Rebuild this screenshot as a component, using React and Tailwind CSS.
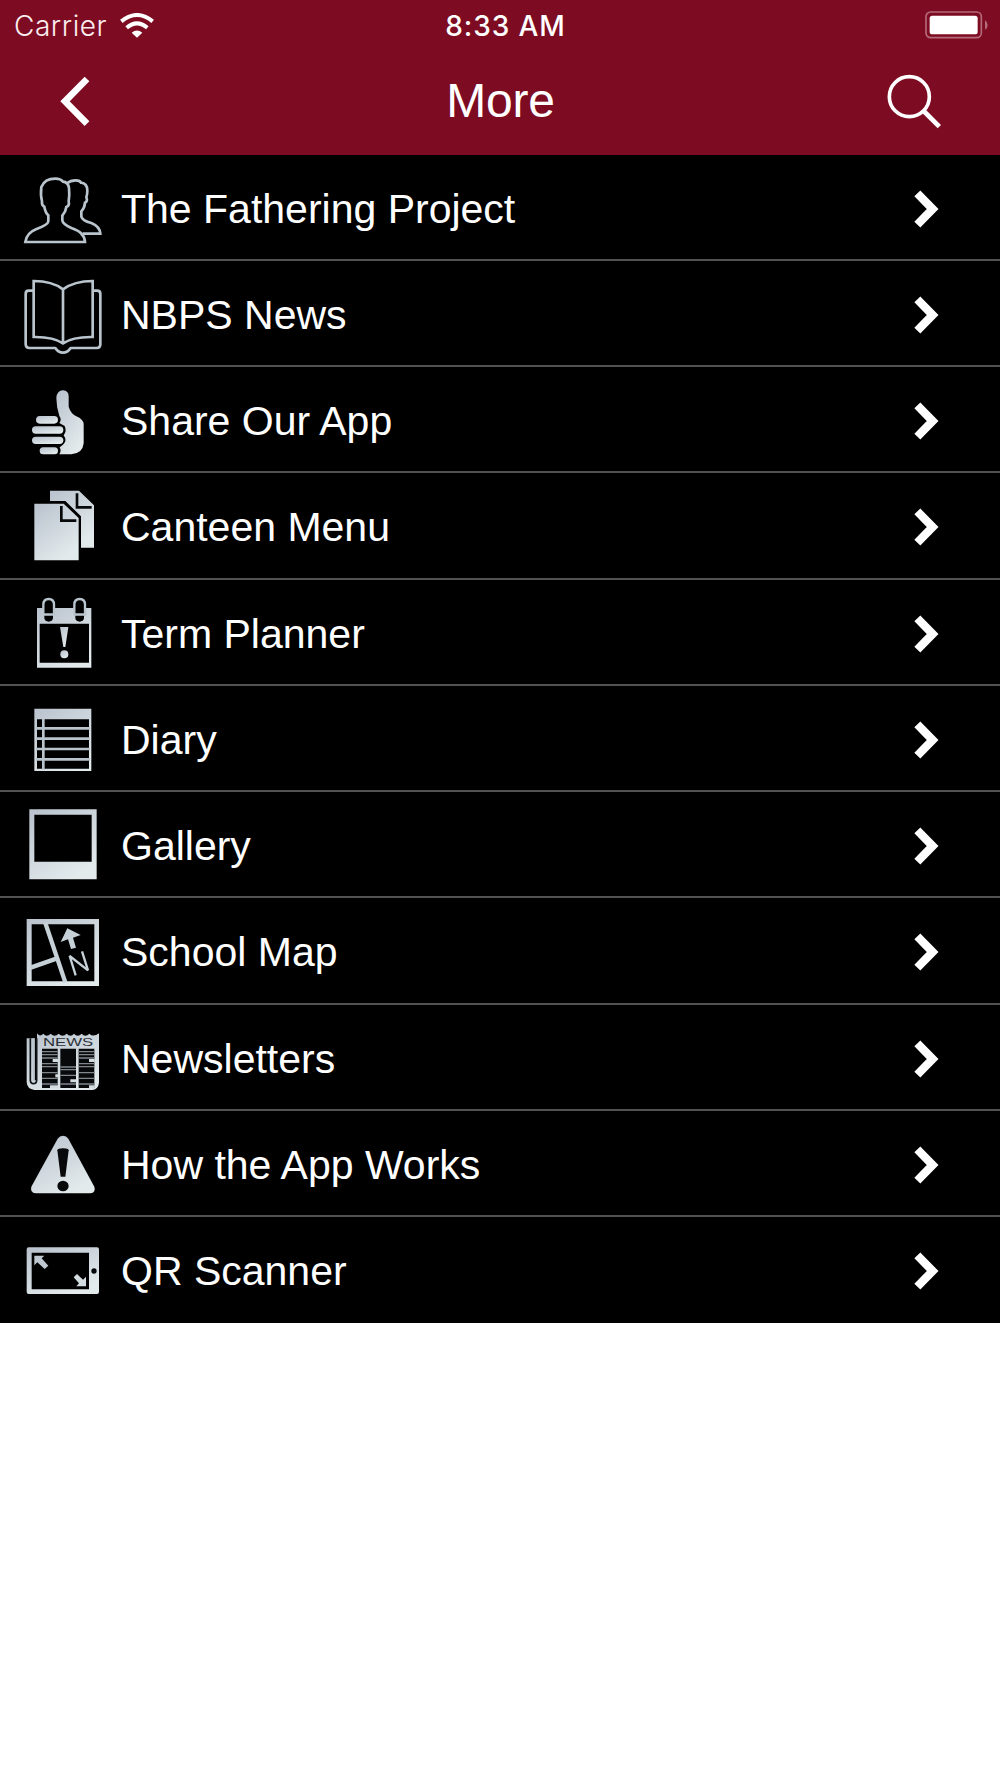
import React from "react";

const G = "url(#metal)";

function RowIcon({ top, children }) {
  return (
    <svg className="block w-[90px] h-[106px] shrink-0" viewBox={`60 ${top} 270 318`} fill="none">
      {children}
    </svg>
  );
}

const line = { stroke: "#b9c4cd", strokeWidth: 8, strokeLinejoin: "round" };

const People = () => (
  <RowIcon top={14}>
    <path {...line} strokeLinejoin="miter" d="M76 272 Q80 245 108 234 Q144 220 145 210 L145 192 Q136 184 133 166 Q124 162 126 150 Q121 132 124 107 Q134 82 166 82 Q182 82 189 91 Q204 92 207 110 Q209 130 206 150 Q209 164 199 167 Q197 182 187 193 L187 207 Q188 218 214 230 Q254 243 255 272 Z" />
    <path {...line} strokeLinejoin="miter" d="M201 96 Q211 87 227 87 Q240 87 243 94 Q262 96 262 118 Q262 129 259 138 Q264 150 255 154 Q254 170 244 180 L244 196 Q247 208 274 215 Q300 226 301 247 L248 247" />
  </RowIcon>
);

const Book = () => (
  <RowIcon top={333}>
    <path {...line} d="M100 419 H86 Q77 419 77 428 V580 Q77 591 88 591 H166 Q175 605 189 605 Q203 605 212 591 H291 Q301 591 301 580 V428 Q301 419 291 419 H279" />
    <path {...line} strokeLinejoin="miter" d="M189 415 Q157 390 101 390 V558 Q160 557 189 577 Q218 557 278 558 V390 Q223 390 189 415 V577" />
  </RowIcon>
);

const Thumb = () => (
  <RowIcon top={-8}>
    <g fill={G}>
      <rect x="108" y="136" width="66" height="23" rx="11.5" />
      <rect x="96" y="167" width="94" height="22" rx="11" />
      <rect x="96" y="198" width="94" height="22" rx="11" />
      <rect x="119" y="230" width="55" height="21" rx="10.5" />
      <path d="M169 82 Q171 59 189 59 Q206 60 206 77 V108 Q212 128 229 137 Q250 146 251 160 V218 Q248 249 214 251 H178 Q185 241 179 230 Q199 218 196 203 L191 194 Q201 180 194 166 L178 157 Q186 146 178 136 Q169 107 169 82 Z" />
    </g>
  </RowIcon>
);

const Documents = () => (
  <RowIcon top={311}>
    <path fill={G} d="M150 361 H237 L282 405 V532 H243 V438 L196 392 H150 Z" />
    <path fill={G} d="M103 400 H191 L236 443 V570 H103 Z" />
    <path stroke="#08090a" strokeWidth="8" d="M184 407 V451 H229 M231 369 V411 H275" />
  </RowIcon>
);

const Planner = () => (
  <RowIcon top={0}>
    <path fill={G} fillRule="evenodd" d="M111 81 H274 V260 H111 Z M119 128 V245 H267 V128 Z" />
    <g fill="#000" stroke="#b9c4cd" strokeWidth="7">
      <path d="M130 100 V71 Q130 54 146 54 Q162 54 162 71 V100 Z" />
      <path d="M223 100 V71 Q223 54 239 54 Q255 54 255 71 V100 Z" />
    </g>
    <path fill="#000" d="M133 104 H159 V112 Q157 122 146 122 Q135 122 133 112 Z M226 104 H252 V112 Q250 122 239 122 Q228 122 226 112 Z" />
    <path fill={G} d="M180 138 H205 L196 198 H190 Z" />
    <circle cx="193" cy="220" r="12" fill={G} />
  </RowIcon>
);

const DiaryPage = () => (
  <RowIcon top={319}>
    <path fill={G} fillRule="evenodd" d="M103 384 H274 V571 H103 Z M111 416 V564 H267 V416 Z" />
    <path stroke="#b9c4cd" strokeWidth="8" d="M130 415 V567 M108 443 H270 M108 474 H270 M108 505 H270 M108 536 H270" />
  </RowIcon>
);

const Polaroid = () => (
  <RowIcon top={8}>
    <path fill={G} fillRule="evenodd" d="M88 57 H290 V267 H88 Z M103 73 V214 H275 V73 Z" />
  </RowIcon>
);

const MapIcon = () => (
  <RowIcon top={327}>
    <path fill={G} fillRule="evenodd" d="M80 384 H297 V585 H80 Z M95 400 V571 H283 V400 Z" />
    <path stroke="#c6d0d7" strokeWidth="13" d="M136 396 L196 574 M92 530 L169 503" />
    <path fill="#c6d0d7" d="M202 412 L242 432 L219 440 L228 470 L213 474 L204 445 L182 453 Z" />
    <path stroke="#c6d0d7" strokeWidth="7" strokeLinejoin="bevel" d="M227 553 L209 495 L264 538 L246 481" />
  </RowIcon>
);

const News = () => (
  <RowIcon top={15}>
    <path fill={G} d="M111 97 Q119 109 130 98 Q140 110 152 98 Q164 110 176 98 Q188 110 200 98 Q212 110 222 98 Q233 110 245 98 Q256 110 268 98 Q280 110 297 97 V245 Q295 265 276 267 H103 Q81 264 80 244 V112 H104 V238 H111 Z" />
    <path stroke="#111417" strokeWidth="5" d="M91 112 V239 Q92 248 100 248 Q110 248 110 237 V112" />
    <path stroke="#b9c4cd" strokeWidth="6" d="M101 112 V240" />
    <text x="129" y="135" fontSize="31" textLength="151" lengthAdjust="spacingAndGlyphs" fill="#2b3035" fontFamily="Liberation Sans, sans-serif">NEWS</text>
    <path fill="#08090a" d="M126 143 H173 V261 H126 Z M181 143 H228 V261 H181 Z M236 143 H283 V261 H236 Z" />
    <path stroke="#7f878d" strokeWidth="4" d="M126 152 H173 M126 161 H173 M126 171 H173 M126 188 H173 M126 197 H173 M126 215 H173 M126 232 H173 M126 249 H173 M181 198 H228 M181 206 H228 M181 223 H228 M181 249 H228 M236 152 H283 M236 161 H283 M236 171 H283 M236 188 H283 M236 197 H283 M236 215 H283 M236 232 H283 M236 249 H283" />
    <path fill="#d3dce0" d="M158 174 H175 V183 H158 Z M267 174 H284 V183 H267 Z M166 220 H175 V229 H166 Z M211 235 H229 V244 H211 Z M150 253 H175 V262 H150 Z M267 253 H284 V262 H267 Z" />
  </RowIcon>
);

const Warning = () => (
  <RowIcon top={4}>
    <path fill={G} d="M173 84 Q179 75 189 75 Q199 75 205 84 L283 228 Q289 246 271 248 H107 Q89 246 94 228 Z" />
    <path fill="#08090a" d="M172 119 Q172 113 189 113 Q206 113 206 119 L196 198 H182 Z" />
    <ellipse cx="189" cy="226" rx="17" ry="16" fill="#08090a" />
  </RowIcon>
);

const Tablet = () => (
  <RowIcon top={323}>
    <path fill={G} fillRule="evenodd" d="M86 411 H291 Q297 411 297 417 V545 Q297 551 291 551 H86 Q80 551 80 545 V417 Q80 411 86 411 Z M95 427 V537 H267 V427 Z" />
    <circle cx="282" cy="482" r="8" fill="#08090a" />
    <path fill="#c0c9d1" d="M103 436 H133 L125 444 L145 466 L134 476 L112 456 L103 465 Z" />
    <path fill="#d3dce0" d="M258 528 H229 L237 519 L221 501 L231 491 L249 508 L258 499 Z" />
  </RowIcon>
);

const items = [
  ["The Fathering Project", People],
  ["NBPS News", Book],
  ["Share Our App", Thumb],
  ["Canteen Menu", Documents],
  ["Term Planner", Planner],
  ["Diary", DiaryPage],
  ["Gallery", Polaroid],
  ["School Map", MapIcon],
  ["Newsletters", News],
  ["How the App Works", Warning],
  ["QR Scanner", Tablet],
];

function StatusBar() {
  return (
    <div className="grid grid-cols-3 items-center h-[50px] pl-[14px] pr-[12px] font-[Inter,sans-serif] leading-none">
      <div className="flex items-center gap-[13px]">
        <span className="pt-[2px] text-[28px] font-light tracking-[0.55px] text-[#fbeef0]">Carrier</span>
        <svg className="w-[34px] h-[25px]" viewBox="0 0 102 75" fill="none">
          <path stroke="#fff" strokeWidth="12" d="M4 25 Q51 -13 98 25" />
          <path stroke="#fff" strokeWidth="12" d="M20 44 Q51 18 82 44" />
          <path fill="#fff" d="M35 59 Q51 46 67 59 L51 74 Z" />
        </svg>
      </div>
      <span className="pt-[2px] text-center text-[28px] font-medium tracking-[0.9px] whitespace-nowrap pl-[9px]">8:33 AM</span>
      <svg className="justify-self-end w-[63px] h-[28px]" viewBox="0 0 189 84">
        <rect x="3" y="3" width="166" height="77" rx="14" fill="none" stroke="#b56a79" strokeWidth="5" />
        <rect x="14" y="14" width="144" height="56" rx="8" fill="#fff" />
        <path fill="#b56a79" d="M180 28 Q188 33 188 42 Q188 51 180 56 Z" />
      </svg>
    </div>
  );
}

export default function App() {
  return (
    <div className="w-[1000px] h-[1778px] bg-white text-white overflow-hidden font-['Liberation_Sans',Arial,sans-serif]">
      <svg className="absolute w-0 h-0">
        <defs>
          <linearGradient id="metal" x1="0" y1="0" x2="0.6" y2="1">
            <stop offset="0" stopColor="#b9c2cd" />
            <stop offset="1" stopColor="#e2eaec" />
          </linearGradient>
        </defs>
      </svg>
      <header className="h-[154.5px] bg-[#7d0c22]">
        <StatusBar />
        <div className="grid grid-cols-3 items-center h-[101px] pl-[59px] pr-[58px]">
          <svg className="w-[32px] h-[50px]" viewBox="0 0 96 150" fill="none">
            <path stroke="#fff" strokeWidth="20" d="M84 9 L18 76 L84 143" />
          </svg>
          <h1 className="text-center text-[48px] leading-none font-normal tracking-[-0.2px]">More</h1>
          <svg className="justify-self-end w-[56px] h-[56px]" viewBox="0 0 168 168" fill="none">
            <circle cx="70" cy="71" r="60" stroke="#fff" strokeWidth="11" />
            <path stroke="#fff" strokeWidth="14" d="M113 114 L160 161" />
          </svg>
        </div>
      </header>
      <ul className="bg-black">
        {items.map(([label, Icon]) => (
          <li key={label} className="flex items-center h-[106.28px] pt-[4px] pl-[20px] pr-[61px] border-b-2 border-[#525254] last:border-black">
            <Icon />
            <span className="ml-[11px] pt-px flex-1 text-[41px] leading-none">{label}</span>
            <svg className="w-[27px] h-[38px]" viewBox="0 0 81 114" fill="none">
              <path stroke="#fff" strokeWidth="25" d="M16 10 L62 57 L16 104" />
            </svg>
          </li>
        ))}
      </ul>
    </div>
  );
}
